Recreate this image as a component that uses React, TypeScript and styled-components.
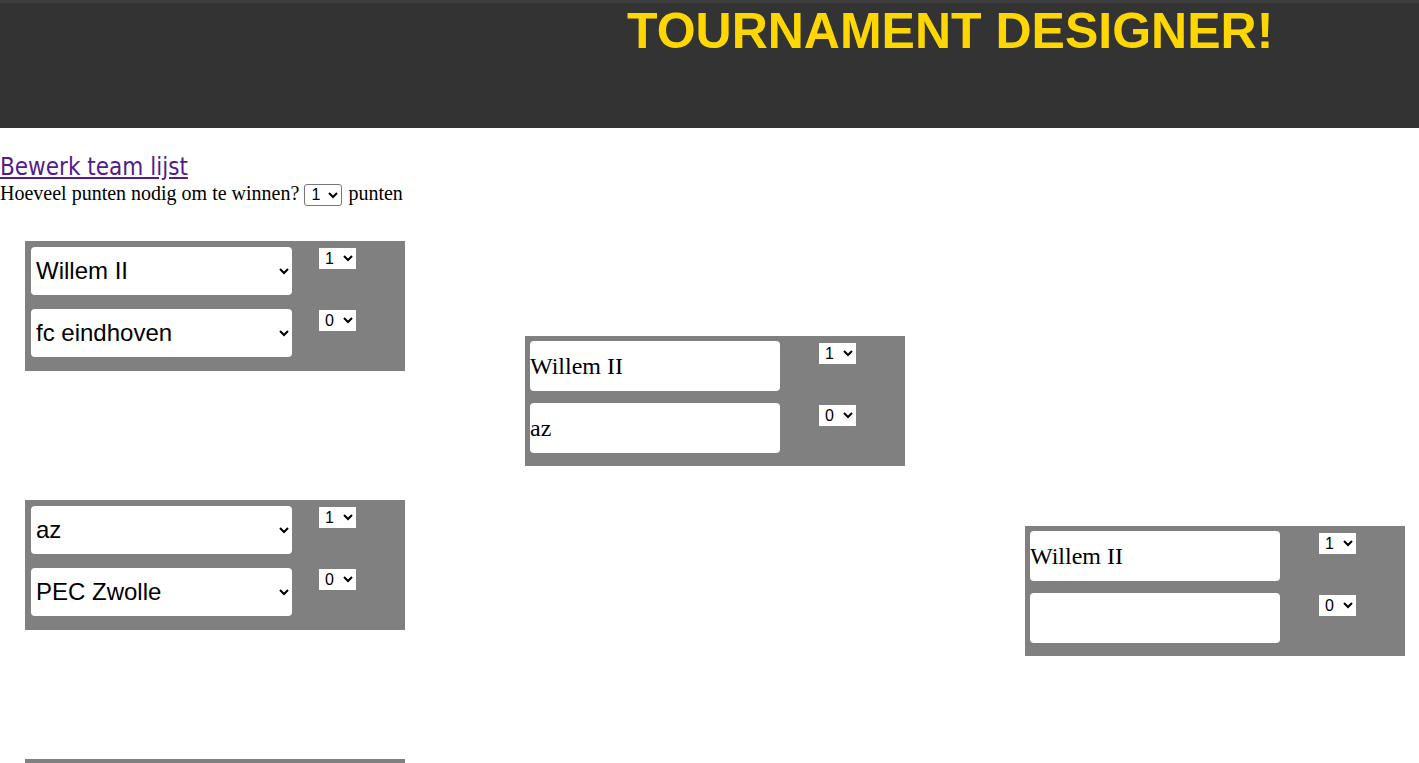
import React from "react";
import styled, { createGlobalStyle } from "styled-components";

const GlobalStyle = createGlobalStyle`
  html, body {
    margin: 0;
    padding: 0;
    overflow: hidden;
    background: #ffffff;
  }
  body {
    font-family: "Liberation Serif", "Times New Roman", serif;
    font-size: 20px;
    color: #000000;
  }
`;

const Header = styled.header`
  height: 125px;
  background: #333333;
  border-top: 3px solid #3d3d3d;
`;

const Title = styled.h1`
  margin: 0;
  padding-left: 627px;
  font-family: "Liberation Sans", Arial, sans-serif;
  font-weight: 700;
  font-size: 50px;
  line-height: 57px;
  color: #ffd700;
  white-space: nowrap;
`;

const EditLink = styled.a`
  display: inline-block;
  margin-top: 25px;
  font-family: "DejaVu Sans Condensed", "DejaVu Sans", sans-serif;
  font-stretch: condensed;
  font-size: 24px;
  line-height: 28px;
  color: #551a8b;
  text-decoration: underline;
`;

const PointsLine = styled.div`
  font-size: 20px;
  line-height: 24px;
`;

const PointsSelect = styled.select`
  font-family: "Liberation Sans", Arial, sans-serif;
  font-size: 16px;
  height: 22px;
  width: 38px;
  margin: 0 1px 0 0;
  padding: 0 0 0 2px;
  border: 1px solid #767676;
  border-radius: 3px;
  background: #ffffff;
  color: #000000;
`;

const Bracket = styled.div`
  display: flex;
  gap: 120px;
  padding: 35px 0 0 25px;
`;

const Column = styled.div<{ $offset: number; $gap: number }>`
  display: flex;
  flex-direction: column;
  width: 380px;
  flex: 0 0 380px;
  padding-top: ${(p) => p.$offset}px;
  gap: ${(p) => p.$gap}px;
`;

const Match = styled.div`
  display: flex;
  flex-direction: column;
  gap: 12px;
  height: 130px;
  box-sizing: border-box;
  padding: 5px 5px 13px;
  background: #808080;
`;

const Row = styled.div`
  display: grid;
  grid-template-columns: 289px auto;
  align-items: start;
  height: 50px;
`;

const TeamSelect = styled.select`
  width: 261px;
  height: 48px;
  margin: 1px;
  border: none;
  border-radius: 4px;
  background: #ffffff;
  color: #000000;
  font-family: "Liberation Sans", Arial, sans-serif;
  font-size: 24px;
  padding: 0 0 0 1px;
`;

const TeamName = styled.div`
  width: 250px;
  height: 50px;
  border-radius: 4px;
  background: #ffffff;
  color: #000000;
  font-family: "Liberation Serif", "Times New Roman", serif;
  font-size: 24px;
  line-height: 50px;
  white-space: nowrap;
  overflow: hidden;
`;

const ScoreSelect = styled.select`
  justify-self: start;
  margin-top: 2px;
  width: 37px;
  height: 21px;
  border: none;
  border-radius: 0;
  background: #ffffff;
  color: #000000;
  font-family: "Liberation Sans", Arial, sans-serif;
  font-size: 16px;
  padding: 0 0 0 2px;
`;

const teams = ["Willem II", "fc eindhoven", "az", "PEC Zwolle", "ajax", "feyenoord", "psv", "fc utrecht"];

type Side = { team: string; score: number };

const Score: React.FC<{ value: number }> = ({ value }) => (
  <ScoreSelect defaultValue={String(value)}>
    <option value="0">0</option>
    <option value="1">1</option>
  </ScoreSelect>
);

const FirstRoundMatch: React.FC<{ sides: Side[] }> = ({ sides }) => (
  <Match>
    {sides.map((s, i) => (
      <Row key={i}>
        <TeamSelect defaultValue={s.team}>
          {teams.map((t) => (
            <option key={t} value={t}>
              {t}
            </option>
          ))}
        </TeamSelect>
        <Score value={s.score} />
      </Row>
    ))}
  </Match>
);

const LaterMatch: React.FC<{ sides: Side[] }> = ({ sides }) => (
  <Match>
    {sides.map((s, i) => (
      <Row key={i}>
        <TeamName>{s.team}</TeamName>
        <Score value={s.score} />
      </Row>
    ))}
  </Match>
);

export default function App() {
  return (
    <>
      <GlobalStyle />
      <Header>
        <Title>TOURNAMENT DESIGNER!</Title>
      </Header>
      <EditLink href="#">Bewerk team lijst</EditLink>
      <PointsLine>
        Hoeveel punten nodig om te winnen?{" "}
        <PointsSelect defaultValue="1">
          <option value="1">1</option>
          <option value="2">2</option>
          <option value="3">3</option>
        </PointsSelect>{" "}
        punten
      </PointsLine>
      <Bracket>
        <Column $offset={0} $gap={129}>
          <FirstRoundMatch
            sides={[
              { team: "Willem II", score: 1 },
              { team: "fc eindhoven", score: 0 },
            ]}
          />
          <FirstRoundMatch
            sides={[
              { team: "az", score: 1 },
              { team: "PEC Zwolle", score: 0 },
            ]}
          />
          <FirstRoundMatch
            sides={[
              { team: "ajax", score: 1 },
              { team: "feyenoord", score: 0 },
            ]}
          />
        </Column>
        <Column $offset={95} $gap={388}>
          <LaterMatch
            sides={[
              { team: "Willem II", score: 1 },
              { team: "az", score: 0 },
            ]}
          />
          <LaterMatch
            sides={[
              { team: "", score: 0 },
              { team: "", score: 0 },
            ]}
          />
        </Column>
        <Column $offset={285} $gap={0}>
          <LaterMatch
            sides={[
              { team: "Willem II", score: 1 },
              { team: "", score: 0 },
            ]}
          />
        </Column>
      </Bracket>
    </>
  );
}
